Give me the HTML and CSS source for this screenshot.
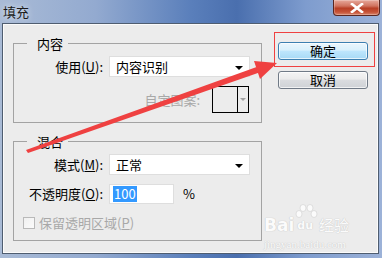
FILE: index.html
```html
<!DOCTYPE html>
<html lang="zh">

<head>
    <meta charset="UTF-8">
    <title>填充</title>
    <link rel="stylesheet" href="styles.css">
</head>

<body>
    <div class="window">
        <div class="titlebar">
            <span class="title">填充</span>
            <button class="close" aria-label="关闭">
                <svg width="14" height="10" viewBox="0 0 14 10">
                    <path d="M2 1 L12 9 M12 1 L2 9" stroke="#fff" stroke-width="2.6" stroke-linecap="square" />
                </svg>
            </button>
        </div>
        <div class="client">
            <div class="groups">
                <fieldset class="group group-content">
                    <legend>内容</legend>
                    <div class="form">
                        <label class="label">使用(<u>U</u>):</label>
                        <div class="select">内容识别<span class="caret"></span></div>
                        <div class="pattern-row">
                            <span class="muted">自定图案:</span>
                            <div class="pattern">
                                <span class="swatch"></span>
                                <span class="pattern-drop"><span class="caret caret-grey"></span></span>
                            </div>
                        </div>
                    </div>
                </fieldset>
                <fieldset class="group group-blend">
                    <legend>混合</legend>
                    <div class="form">
                        <label class="label">模式(<u>M</u>):</label>
                        <div class="select">正常<span class="caret"></span></div>
                        <label class="label">不透明度(<u>O</u>):</label>
                        <div class="opacity">
                            <div class="input"><span class="selected">100</span></div>
                            <span class="unit">%</span>
                        </div>
                        <div class="check-row">
                            <span class="checkbox"></span>
                            <span class="muted">保留透明区域(<u>P</u>)</span>
                        </div>
                    </div>
                </fieldset>
            </div>
            <div class="actions">
                <button class="btn btn-default">确定</button>
                <button class="btn">取消</button>
            </div>
        </div>

        <!-- 标注：红框 + 箭头 -->
        <div class="mark-box"></div>
        <svg class="mark-arrow" width="382" height="258" viewBox="0 0 382 258">
            <polygon points="26,150 28,153 258.6,72.8 256.6,67.1" fill="#ef4141" />
            <polygon points="277,63 254,61 260,79" fill="#ef4141" />
        </svg>

        <div class="watermark">
            <div class="wm-logo">
                <span class="wm-bai">Bai</span>
                <span class="wm-du">
                    <svg class="wm-paw" width="26" height="16" viewBox="0 0 26 16">
                        <ellipse cx="6" cy="10" rx="3" ry="3.5" />
                        <ellipse cx="10" cy="4" rx="3" ry="3.5" />
                        <ellipse cx="17" cy="4" rx="3" ry="3.5" />
                        <ellipse cx="21" cy="10" rx="3" ry="3.5" />
                    </svg>
                    du
                </span>
                <span class="wm-jy">经验</span>
            </div>
            <div class="wm-url">jingyan.baidu.com</div>
        </div>
    </div>
</body>

</html>
```

FILE: styles.css
```css
:root {
    --client-bg: #ececec;
    --group-line: #a3a3a3;
    --text-color: #000;
    --muted-color: #a8a8a8;
    --mark-red: #ef4141;
}

body {
    margin: 0;
    font-family: "Noto Sans CJK SC", "Noto Sans", sans-serif;
    font-size: 13px;
    color: var(--text-color);
}

.window {
    position: relative;
    width: 382px;
    height: 258px;
    overflow: hidden;
    background: linear-gradient(90deg, #a9bbd6 0%, #93aad0 25%, #5a7fbb 50%, #4a6fae 62%, #7e9cce 80%, #9cb2d8 100%);
    display: flex;
    flex-direction: column;
}

.titlebar {
    height: 23px;
    display: flex;
    justify-content: space-between;
    align-items: flex-start;
    padding-left: 3px;
    padding-right: 2px;
}

.title {
    margin-top: 4px;
    line-height: 15px;
    font-size: 13px;
    color: #1b1b1b;
    text-shadow: 0 0 6px rgba(255, 255, 255, 0.8);
}

.close {
    width: 47px;
    height: 16px;
    padding: 0;
    border: 1px solid #5a2620;
    border-top: none;
    border-radius: 0 0 4px 4px;
    background: linear-gradient(180deg, #e7a99c 0%, #d0735f 40%, #b83f26 55%, #c65236 80%, #d8866c 100%);
    display: grid;
    place-items: center;
    box-shadow: inset 0 0 0 1px rgba(255, 255, 255, 0.25);
}

.client {
    flex: 1;
    margin: 0 3px 4px 2px;
    border: 1px solid #4f5d70;
    background: var(--client-bg);
    display: flex;
    box-shadow: inset 0 0 0 1px #fbfbfb;
}

.groups {
    padding: 12px 0 0 10px;
    display: flex;
    flex-direction: column;
    gap: 11px;
}

.group {
    margin: 0;
    width: 247px;
    box-sizing: border-box;
    width: 249px;
    border: 1px solid var(--group-line);
    padding: 0 10px 0 0;
}

.group legend {
    margin-left: 13px;
    padding: 0 5px 0 10px;
    line-height: 15px;
    font-size: 13px;
}

.group-content {
    padding-top: 5px;
    padding-bottom: 9px;
}

.group-blend {
    padding-top: 5px;
    padding-bottom: 8px;
}

.form {
    display: grid;
    grid-template-columns: 89px 141px;
    column-gap: 6px;
    row-gap: 9px;
    align-items: center;
}

.label {
    text-align: right;
    line-height: 16px;
}

.select {
    position: relative;
    height: 21px;
    box-sizing: border-box;
    background: #fff;
    border: 1px solid #dedede;
    padding-left: 6px;
    line-height: 19px;
}

.caret {
    position: absolute;
    right: 6px;
    top: 9px;
    width: 0;
    height: 0;
    border-left: 4px solid transparent;
    border-right: 4px solid transparent;
    border-top: 4px solid #000;
}

.caret-grey {
    position: static;
    border-left-width: 3px;
    border-right-width: 3px;
    border-top: 3px solid #a0a0a0;
}

.pattern-row {
    grid-column: 1 / 3;
    display: flex;
    justify-content: flex-end;
    align-items: center;
    gap: 12px;
    margin-right: 1px;
}

.muted {
    color: var(--muted-color);
}

.pattern {
    width: 37px;
    height: 27px;
    box-sizing: border-box;
    border: 1px solid #000;
    display: flex;
}

.swatch {
    flex: 1;
    border-right: 1px solid #000;
}

.pattern-drop {
    width: 10px;
    display: grid;
    place-items: center;
}

.opacity {
    display: flex;
    align-items: center;
    gap: 9px;
}

.input {
    width: 65px;
    height: 20px;
    box-sizing: border-box;
    background: #fff;
    border: 1px solid #dedede;
    padding-left: 3px;
    display: flex;
    align-items: center;
}

.selected {
    background: #3399ff;
    color: #fff;
    line-height: 16px;
    padding: 0 1px;
}

.unit {
    line-height: 16px;
}

.check-row {
    grid-column: 1 / 3;
    display: flex;
    align-items: center;
    gap: 4px;
    padding-left: 9px;
}

.checkbox {
    width: 12px;
    height: 12px;
    box-sizing: border-box;
    border: 1px solid #b9b9b9;
    background: linear-gradient(135deg, #f0f0f0, #fbfbfb);
}

.actions {
    padding: 18px 0 0 16px;
    display: flex;
    flex-direction: column;
    gap: 11px;
}

.btn {
    width: 90px;
    height: 18px;
    padding: 0;
    font-family: inherit;
    font-size: 13px;
    line-height: 14px;
    color: #000;
    border: 1px solid #707a86;
    border-radius: 3px;
    background: linear-gradient(180deg, #f4f4f4 0%, #ebebeb 45%, #dadcdf 50%, #cfd2d6 100%);
    box-shadow: inset 0 0 0 1px rgba(255, 255, 255, 0.7);
}

.btn-default {
    border-color: #3c7fb1;
    background: linear-gradient(180deg, #eaf6fd 0%, #d9f0fc 45%, #bee6fd 50%, #a7d9f5 100%);
}

.mark-box {
    position: absolute;
    left: 274px;
    top: 32px;
    width: 99px;
    height: 33px;
    border: 1px solid var(--mark-red);
}

.mark-arrow {
    position: absolute;
    left: 0;
    top: 0;
}

.watermark {
    position: absolute;
    left: 264px;
    top: 208px;
    width: 92px;
    color: #fbfbfb;
    text-shadow: 0 0 1px #c8c8c8, 0 0 1px #c8c8c8;
}

.wm-logo {
    display: flex;
    align-items: flex-end;
    height: 26px;
}

.wm-bai {
    font-family: "DejaVu Sans", sans-serif;
    font-weight: bold;
    font-size: 17px;
    line-height: 18px;
}

.wm-du {
    position: relative;
    font-family: "DejaVu Sans", sans-serif;
    font-weight: bold;
    font-size: 11px;
    line-height: 12px;
    margin: 0 2px 2px 3px;
}

.wm-paw {
    position: absolute;
    left: -4px;
    top: -16px;
    fill: #fbfbfb;
    stroke: #cfcfcf;
    stroke-width: 0.6;
}

.wm-jy {
    font-size: 15px;
    line-height: 18px;
    margin-left: 4px;
}

.wm-url {
    margin-top: 4px;
    font-family: "Liberation Serif", serif;
    font-size: 11px;
    line-height: 12px;
}
```
